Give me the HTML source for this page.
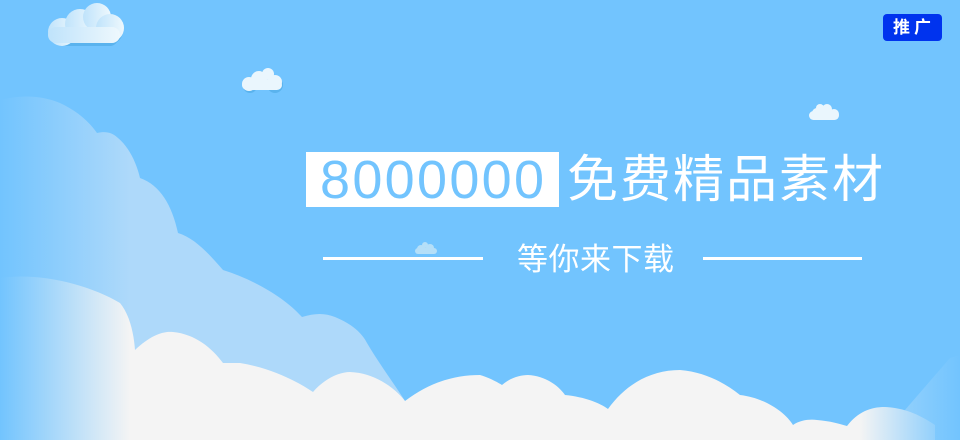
<!DOCTYPE html>
<html><head><meta charset="utf-8"><style>
*{margin:0;padding:0}
body{width:960px;height:440px;overflow:hidden;background:#72c4fe;position:relative;font-family:"Liberation Sans","Noto Sans CJK SC",sans-serif}
svg{position:absolute;left:0;top:0}
.box{position:absolute;left:306px;top:152px;width:253px;height:55px;background:#fff}
.num{position:absolute;left:320px;top:150px;color:#72c4fe;font-size:54px;line-height:60px;letter-spacing:2.3px;font-family:"Liberation Sans",sans-serif;white-space:nowrap}
.t1{position:absolute;left:567px;top:150px;color:#fff;font-size:51px;line-height:60px;letter-spacing:2px;white-space:nowrap}
.t2{position:absolute;left:517px;top:240px;color:#fff;font-size:31px;line-height:40px;letter-spacing:0.5px;white-space:nowrap}
.ln{position:absolute;top:257px;height:3px;background:#fff}
.badge{position:absolute;left:883px;top:14px;width:59px;height:27px;background:#0033ee;border-radius:4px;color:#fff;font-weight:bold;font-size:17px;line-height:27px;text-align:center;letter-spacing:4px;text-indent:3px}
</style></head><body>
<svg width="960" height="440" viewBox="0 0 960 440">
<defs>
<linearGradient id="lf" x1="0" x2="1"><stop offset="0" stop-color="#72c4fe"/><stop offset="1" stop-color="#72c4fe" stop-opacity="0"/></linearGradient>
<linearGradient id="rf" x1="0" x2="1"><stop offset="0" stop-color="#72c4fe" stop-opacity="0"/><stop offset="1" stop-color="#72c4fe"/></linearGradient>
<linearGradient id="cg" x1="0" x2="1"><stop offset="0" stop-color="#bfe3fb"/><stop offset="1" stop-color="#eef8fd"/></linearGradient>
</defs>
<path d="M0,100 C20,95 40,95 60,103 C75,110 88,120 97,133 C105,131 112,132 118,138 C130,148 137,165 140,178 C160,185 172,205 178,233 C195,238 210,255 223,270 C255,280 285,298 302,317 C315,313 325,313 335,317 C352,324 362,333 367,343 C380,365 395,385 405,401 L0,440 Z" fill="#aed9fa"/>
<path d="M905,410 L950,358 L960,355 L960,440 L880,440 Z" fill="#a8d8fb"/>
<path d="M0,278 C40,272 90,285 120,303 C130,315 134,335 135,350 C150,336 162,331 173,332 C195,334 212,348 223,363 L240,363 C270,368 295,380 313,392 C325,378 340,372 350,372 C375,373 395,388 405,401 C430,382 455,375 480,375 C490,378 497,382 502,385 C510,378 520,375 528,375 C545,376 558,385 565,395 C585,397 600,403 608,409 C625,385 650,370 680,370 C705,372 725,383 740,395 C765,398 785,412 793,425 C800,420 810,419 817,420 C830,421 840,424 847,426 C858,412 870,407 885,407 C905,408 920,415 935,425 L935,440 L0,440 Z" fill="#f4f4f4"/>
<rect x="0" y="90" width="130" height="350" fill="url(#lf)"/>
<rect x="860" y="330" width="100" height="110" fill="url(#rf)"/>
<g fill="#5ab3ee"><circle cx="66" cy="34" r="12"/><circle cx="80" cy="27" r="14"/><circle cx="97" cy="21" r="13"/><circle cx="110" cy="31" r="13"/><rect x="58" y="30" width="60" height="16" rx="8"/></g>
<g fill="url(#cg)"><circle cx="62" cy="32" r="14"/><circle cx="80" cy="24" r="15"/><circle cx="97" cy="17" r="14"/><circle cx="110" cy="28" r="14"/><rect x="48" y="27" width="72" height="16" rx="8"/></g>
<g fill="#5ab3ee"><circle cx="250" cy="86" r="7"/><circle cx="263" cy="80" r="9"/><circle cx="275" cy="85" r="8"/></g>
<g fill="#eaf6fd"><circle cx="249" cy="84" r="7"/><circle cx="259" cy="79" r="8"/><circle cx="268" cy="74" r="6"/><circle cx="275" cy="82" r="7"/><rect x="242" y="80" width="40" height="10" rx="5"/></g>
<g fill="#eaf6fd"><circle cx="817" cy="113" r="5"/><circle cx="820" cy="108" r="4"/><circle cx="827" cy="109" r="5"/><circle cx="834" cy="114" r="5"/><rect x="809" y="111" width="30" height="9" rx="4.5"/></g>
<g fill="#b5dff8"><circle cx="421" cy="249" r="4"/><circle cx="425" cy="245" r="3"/><circle cx="430" cy="248" r="4"/><rect x="415" y="248" width="22" height="6" rx="3"/></g>
</svg>
<div class="box"></div>
<div class="num">8000000</div>
<div class="t1">免费精品素材</div>
<div class="ln" style="left:323px;width:160px"></div>
<div class="ln" style="left:703px;width:159px"></div>
<div class="t2">等你来下载</div>
<div class="badge">推广</div>
</body></html>
